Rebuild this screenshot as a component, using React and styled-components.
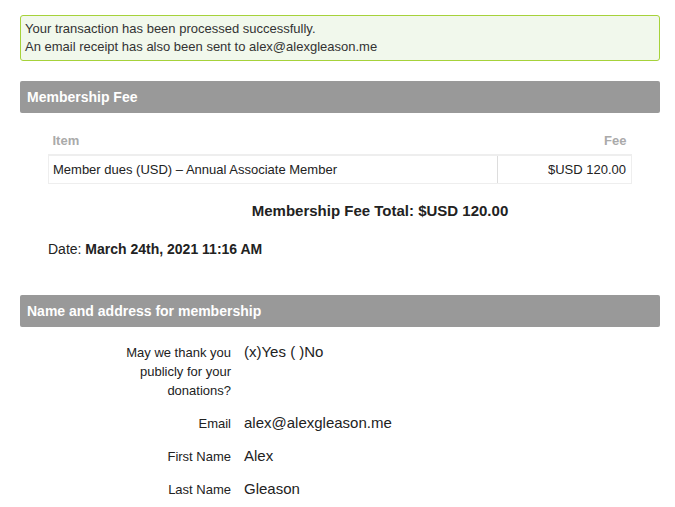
import { createGlobalStyle, styled } from 'styled-components';

const GlobalStyle = createGlobalStyle`
    body {
        margin: 0;
        background: #fff;
        font-family: "Liberation Sans", Arial, sans-serif;
        color: #222;
    }
`;

const Page = styled.div`
    padding: 15px 15px 0 20px;
    width: 640px;
`;

const Notice = styled.div`
    border: 1px solid #a6d23a;
    border-radius: 3px;
    background: #f1f8ec;
    padding: 4px 4px 4px 4px;
    font-size: 13px;
    line-height: 18px;
    color: #333;
`;

const SectionBar = styled.h3`
    margin: ${(props) => props.$top}px 0 0;
    height: 32px;
    line-height: 32px;
    padding: 0 7px;
    background: #999;
    border-radius: 2px;
    color: #fff;
    font-size: 14px;
    font-weight: 700;
`;

const FeeTable = styled.table`
    margin: 20px 28px 0 28px;
    width: 584px;
    border-collapse: collapse;
    font-size: 13px;
`;

const HeadCell = styled.th`
    text-align: ${(props) => props.$align || 'left'};
    color: #aaa;
    font-weight: 700;
    padding: 0 5px 6px 4px;
    height: 15px;
    border-bottom: 2px solid #eee;
`;

const Cell = styled.td`
    text-align: ${(props) => props.$align || 'left'};
    padding: 0 5px 0 4px;
    height: 27px;
    border-left: 1px solid #eee;
    border-right: 1px solid ${(props) => (props.$divider ? '#ddd' : '#eee')};
    border-bottom: 1px solid #eee;
`;

const Total = styled.div`
    margin-top: 17px;
    padding-left: 80px;
    text-align: center;
    font-size: 15px;
    font-weight: 700;
    line-height: 19px;
`;

const DateLine = styled.div`
    margin: 20px 0 0 28px;
    font-size: 14px;
    line-height: 18px;
    b {
        font-weight: 700;
    }
`;

const Form = styled.div`
    display: flex;
    flex-direction: column;
    gap: 14px;
    margin-top: 16px;
`;

const Row = styled.div`
    display: grid;
    grid-template-columns: 211px 1fr;
    column-gap: 13px;
`;

const Label = styled.div`
    text-align: right;
    font-size: 13px;
    line-height: 19px;
    color: #222;
    padding-left: 100px;
`;

const Value = styled.div`
    font-size: 15px;
    line-height: 19px;
    margin-top: -1px;
`;

const fields = [
    { label: 'May we thank you publicly for your donations?', value: '(x)Yes ( )No' },
    { label: 'Email', value: 'alex@alexgleason.me' },
    { label: 'First Name', value: 'Alex' },
    { label: 'Last Name', value: 'Gleason' },
];

export default function App() {
    return (
        <>
            <GlobalStyle />
            <Page>
                <Notice>
                    Your transaction has been processed successfully.
                    <br />
                    An email receipt has also been sent to alex@alexgleason.me
                </Notice>
                <SectionBar $top={20}>Membership Fee</SectionBar>
                <FeeTable>
                    <thead>
                        <tr>
                            <HeadCell>Item</HeadCell>
                            <HeadCell $align="right">Fee</HeadCell>
                        </tr>
                    </thead>
                    <tbody>
                        <tr>
                            <Cell $divider>Member dues (USD) – Annual Associate Member</Cell>
                            <Cell $align="right">$USD 120.00</Cell>
                        </tr>
                    </tbody>
                </FeeTable>
                <Total>Membership Fee Total: $USD 120.00</Total>
                <DateLine>
                    Date: <b>March 24th, 2021 11:16 AM</b>
                </DateLine>
                <SectionBar $top={37}>Name and address for membership</SectionBar>
                <Form>
                    {fields.map((f) => (
                        <Row key={f.label}>
                            <Label>{f.label}</Label>
                            <Value>{f.value}</Value>
                        </Row>
                    ))}
                </Form>
            </Page>
        </>
    );
}
